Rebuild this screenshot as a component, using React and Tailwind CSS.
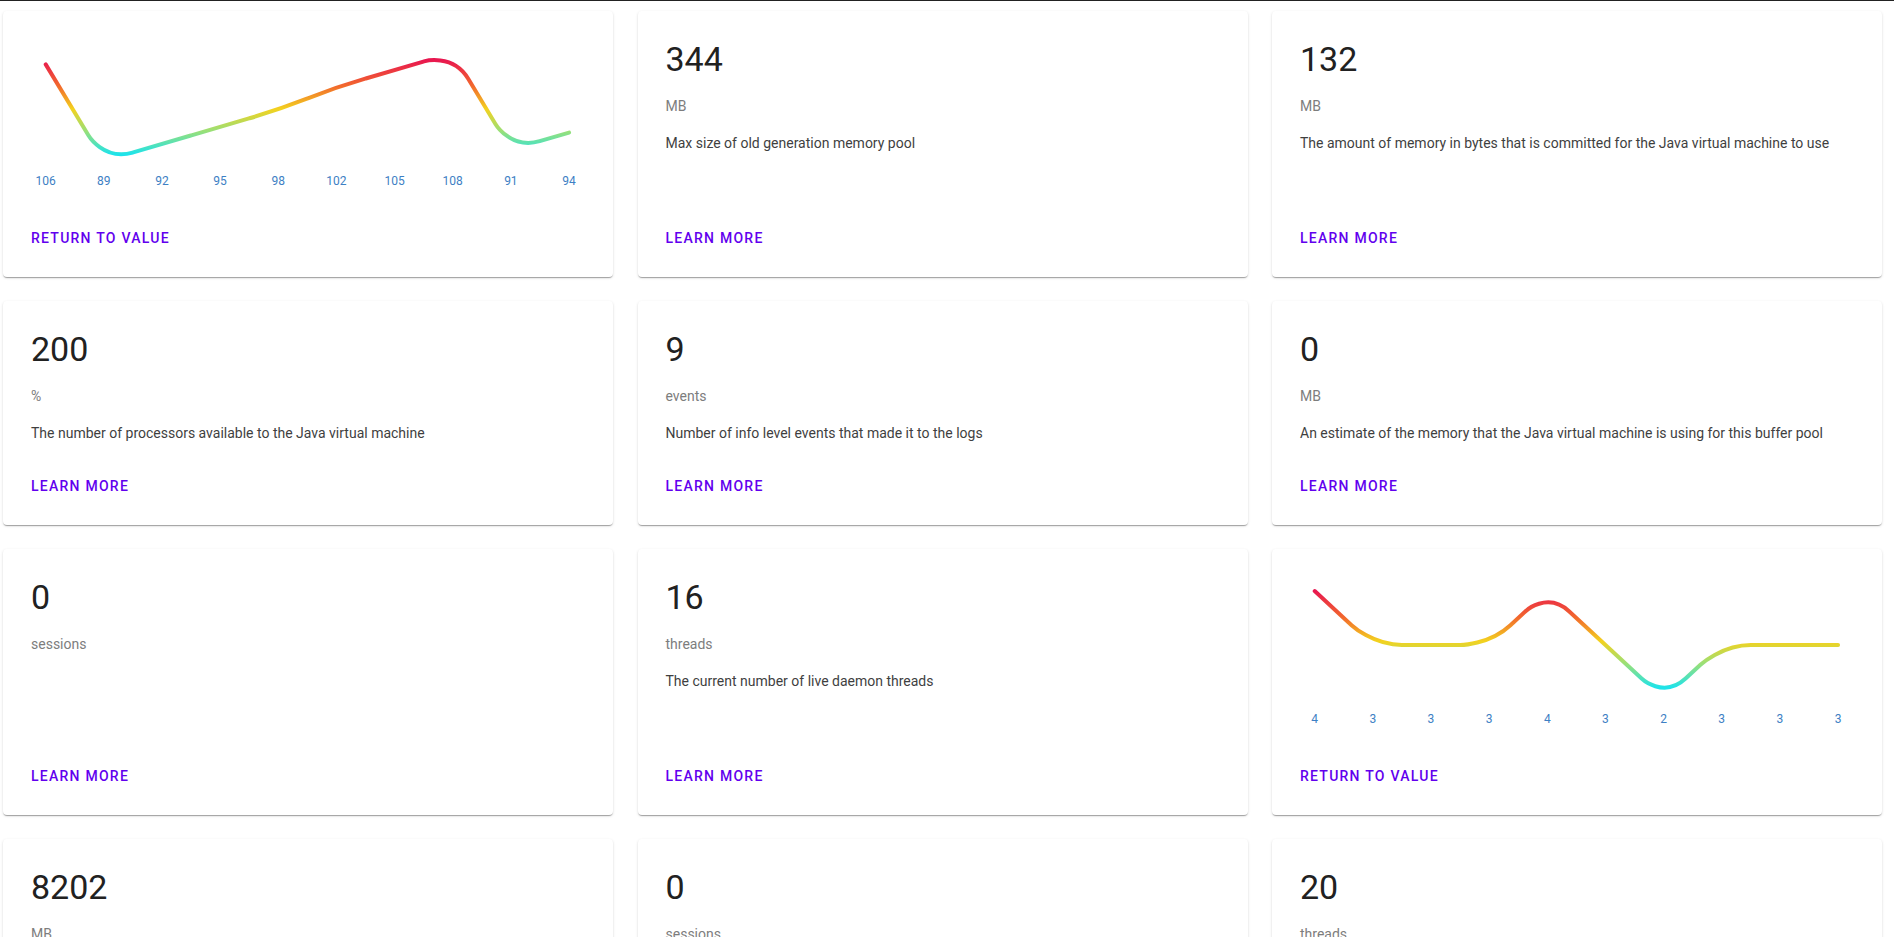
import { useId } from "react";

const CHART_H = 108;
const X0 = 42.7;
const STEP = 58.15;

function dist(a, b) {
  return Math.hypot(a.x - b.x, a.y - b.y);
}

function moveTo(to, from, r) {
  const d = dist(to, from);
  return {
    x: from.x + ((to.x - from.x) * r) / d,
    y: from.y + ((to.y - from.y) * r) / d,
  };
}

function collinear(p, q, n) {
  return (q.y - p.y) * (n.x - q.x) === (n.y - q.y) * (q.x - p.x);
}

// rounded-corner path, same idea as react-trend's smooth line
function buildPath(pts, radius) {
  const [first, ...rest] = pts;
  return rest.reduce((path, point, i) => {
    const next = rest[i + 1];
    const prev = rest[i - 1] || first;
    if (!next || collinear(prev, point, next)) return `${path} L ${point.x},${point.y}`;
    const threshold = Math.min(dist(prev, point), dist(next, point));
    const r = threshold / 2 < radius ? threshold / 2 : radius;
    const before = moveTo(prev, point, r);
    const after = moveTo(next, point, r);
    return `${path} L ${before.x},${before.y} S ${point.x},${point.y} ${after.x},${after.y}`;
  }, `M ${first.x},${first.y}`);
}

function Trend({ data }) {
  const id = useId().replace(/:/g, "");
  const max = Math.max(...data);
  const min = Math.min(...data);
  const pts = data.map((v, i) => ({
    x: X0 + i * STEP,
    y: 12 + ((max - v) / (max - min)) * CHART_H,
  }));
  return (
    <svg viewBox="0 0 610 130" preserveAspectRatio="none" className="block w-full h-[130px] mt-[30px]">
      <defs>
        <linearGradient id={`g${id}`} x1="0" y1="0" x2="0" y2="1">
          <stop offset="0%" stopColor="#e8174f" />
          <stop offset="28%" stopColor="#f26a2c" />
          <stop offset="52%" stopColor="#f3d21f" />
          <stop offset="76%" stopColor="#97e07a" />
          <stop offset="100%" stopColor="#1ee3ea" />
        </linearGradient>
      </defs>
      <path d={buildPath(pts, 30)} fill="none" stroke={`url(#g${id})`} strokeWidth="4" strokeLinecap="round" strokeLinejoin="round" />
    </svg>
  );
}

function Action({ label, chart }) {
  return (
    <div className={`mt-auto px-[28px] pb-[29px] leading-5 ${chart ? "pt-[37px]" : "pt-[33px]"}`}>
      <button className="block text-[14px] leading-5 font-medium uppercase tracking-[1.25px] text-[#6200ee] cursor-pointer">
        {label}
      </button>
    </div>
  );
}

function ChartCard({ data }) {
  return (
    <div className="bg-white rounded-[4px] flex flex-col shadow-[0_2px_1px_-1px_rgba(0,0,0,0.2),0_1px_1px_0_rgba(0,0,0,0.14),0_1px_3px_0_rgba(0,0,0,0.12)]">
      <Trend data={data} />
      <div className="grid grid-cols-10 pl-[13.6px] pr-[14.9px] h-5">
        {data.map((v, i) => (
          <span key={i} className="text-center text-[12px] leading-5 text-[#3d80c4]">
            {v}
          </span>
        ))}
      </div>
      <Action label="Return to value" chart />
    </div>
  );
}

function StatCard({ value, unit, desc }) {
  return (
    <div className="bg-white rounded-[4px] flex flex-col shadow-[0_2px_1px_-1px_rgba(0,0,0,0.2),0_1px_1px_0_rgba(0,0,0,0.14),0_1px_3px_0_rgba(0,0,0,0.12)]">
      <div className="px-[28px] pt-[27px]">
        <div className="text-[34px] leading-[42px] text-[#212121]">{value}</div>
        <div className="mt-4 text-[14px] leading-5 text-[#7d7d7d]">{unit}</div>
        {desc && <p className="mt-[17px] text-[14px] leading-5 text-[#3f3f3f] whitespace-nowrap">{desc}</p>}
      </div>
      <Action label="Learn more" />
    </div>
  );
}

const cards = [
  { chart: [106, 89, 92, 95, 98, 102, 105, 108, 91, 94] },
  { value: 344, unit: "MB", desc: "Max size of old generation memory pool" },
  { value: 132, unit: "MB", desc: "The amount of memory in bytes that is committed for the Java virtual machine to use" },
  { value: 200, unit: "%", desc: "The number of processors available to the Java virtual machine" },
  { value: 9, unit: "events", desc: "Number of info level events that made it to the logs" },
  { value: 0, unit: "MB", desc: "An estimate of the memory that the Java virtual machine is using for this buffer pool" },
  { value: 0, unit: "sessions" },
  { value: 16, unit: "threads", desc: "The current number of live daemon threads" },
  { chart: [4, 3, 3, 3, 4, 3, 2, 3, 3, 3] },
  { value: 8202, unit: "MB" },
  { value: 0, unit: "sessions" },
  { value: 20, unit: "threads" },
];

export default function App() {
  return (
    <div className="min-h-screen bg-white border-t border-[#222] font-['Roboto',sans-serif]">
      <div className="grid grid-cols-3 gap-x-[24.5px] gap-y-6 pt-[10px] pl-[3px] pr-[12px] pb-6">
        {cards.map((c, i) =>
          c.chart ? <ChartCard key={i} data={c.chart} /> : <StatCard key={i} {...c} />
        )}
      </div>
    </div>
  );
}
